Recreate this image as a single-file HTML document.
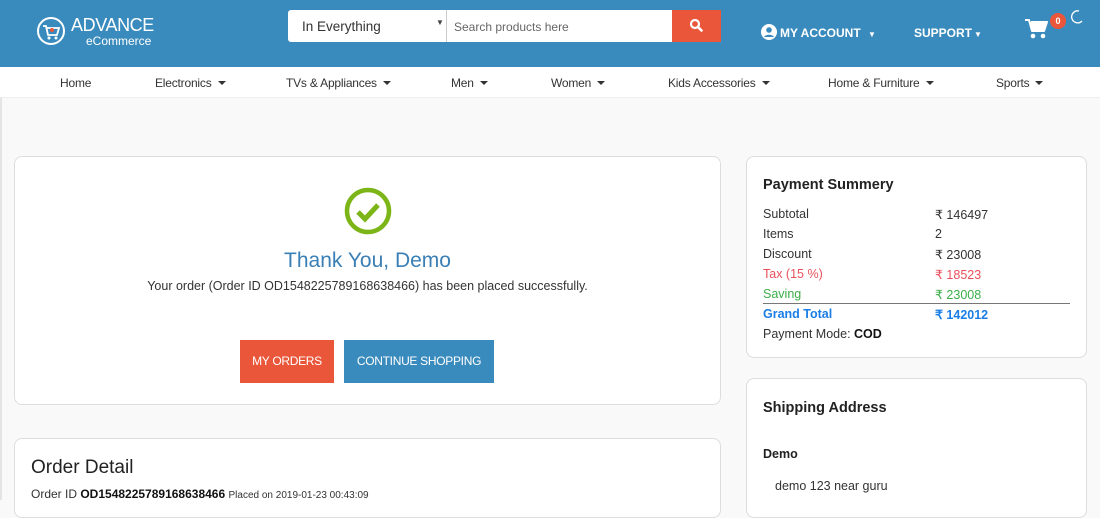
<!DOCTYPE html>
<html><head><meta charset="utf-8"><style>
*{box-sizing:border-box;margin:0;padding:0}
body{width:1100px;height:500px;overflow:hidden;background:#f9f9f9;font-family:"Liberation Sans",sans-serif;position:relative;color:#222}
.a{position:absolute}
.hdr{left:0;top:0;width:1100px;height:67px;background:#3a8bbd}
.nav{left:0;top:67px;width:1100px;height:31px;background:#fff;border-bottom:1px solid #eee}
.nav span{position:absolute;top:9px;font-size:12px;color:#333;letter-spacing:-.2px}
.car{display:inline-block;border-left:4px solid transparent;border-right:4px solid transparent;border-top:4px solid #333;vertical-align:middle;margin-left:6px;margin-top:-2px}
.card{background:#fff;border:1px solid #ddd;border-radius:8px}
.row{position:absolute;left:16px;font-size:12.5px;color:#333}
.v{position:absolute;left:172px;top:0;white-space:nowrap}
</style></head><body>
<div class="a hdr"></div>
<svg class="a" style="left:36px;top:16px" width="30" height="30" viewBox="0 0 30 30"><circle cx="15" cy="15" r="13" fill="none" stroke="#fff" stroke-width="2"/><path d="M7 10h3l2 9h9l2-7H11" fill="none" stroke="#fff" stroke-width="1.8"/><circle cx="13" cy="22" r="1.5" fill="#fff"/><circle cx="20" cy="22" r="1.5" fill="#fff"/><circle cx="16" cy="14" r="2" fill="#e9563a"/></svg>
<div class="a" style="left:71px;top:15px;color:#fff;font-size:18px;letter-spacing:-.4px">ADVANCE</div>
<div class="a" style="left:86px;top:34px;color:#fff;font-size:12px">eCommerce</div>
<div class="a" style="left:288px;top:10px;width:159px;height:32px;background:#fff;border-radius:3px 0 0 3px;border-right:1px solid #ccc"></div>
<div class="a" style="left:302px;top:19px;font-size:13.5px;color:#333">In Everything</div>
<div class="a" style="left:436px;top:18px;font-size:8px;color:#444">▼</div>
<div class="a" style="left:447px;top:10px;width:226px;height:32px;background:#fff"></div>
<div class="a" style="left:454px;top:20px;font-size:12px;color:#666">Search products here</div>
<div class="a" style="left:672px;top:10px;width:49px;height:32px;background:#e9563a"></div>
<svg class="a" style="left:689px;top:18px" width="14" height="14" viewBox="0 0 14 14"><circle cx="6" cy="6" r="4" fill="none" stroke="#fff" stroke-width="2.2"/><path d="M9 9l3.5 3.5" stroke="#fff" stroke-width="2.6" stroke-linecap="round"/></svg>
<svg class="a" style="left:761px;top:24px" width="16" height="16" viewBox="0 0 16 16"><circle cx="8" cy="8" r="8" fill="#fff"/><circle cx="8" cy="6" r="2.8" fill="#3a8bbd"/><path d="M3 13c1.5-3 8.5-3 10 0" fill="#3a8bbd"/></svg>
<div class="a" style="left:780px;top:26px;font-size:12px;font-weight:bold;color:#fff">MY ACCOUNT <span style="font-size:8px;margin-left:4px">▼</span></div>
<div class="a" style="left:914px;top:26px;font-size:12px;font-weight:bold;color:#fff">SUPPORT<span style="font-size:8px;margin-left:2px">▼</span></div>
<svg class="a" style="left:1024px;top:18px" width="24" height="22" viewBox="0 0 24 22"><path d="M1 2h4l3 11h12l3-9H7" fill="#fff" stroke="#fff" stroke-width="2" stroke-linejoin="round"/><circle cx="9" cy="18" r="2.3" fill="#fff"/><circle cx="19" cy="18" r="2.3" fill="#fff"/></svg>
<div class="a" style="left:1050px;top:13px;width:16px;height:16px;border-radius:50%;background:#e9563a;color:#fff;font-size:9px;font-weight:bold;text-align:center;line-height:16px">0</div>
<svg class="a" style="left:1071px;top:10px" width="12" height="14" viewBox="0 0 12 14"><path d="M8 1A6 6 0 1 0 11 11" fill="none" stroke="#fff" stroke-width="1.3"/></svg>
<div class="a nav">
<span style="left:60px">Home</span>
<span style="left:155px">Electronics<i class="car"></i></span>
<span style="left:286px">TVs &amp; Appliances<i class="car"></i></span>
<span style="left:451px">Men<i class="car"></i></span>
<span style="left:551px">Women<i class="car"></i></span>
<span style="left:668px">Kids Accessories<i class="car"></i></span>
<span style="left:828px">Home &amp; Furniture<i class="car"></i></span>
<span style="left:996px">Sports<i class="car"></i></span>
</div>
<div class="a" style="left:0;top:98px;width:2px;height:402px;background:#e4e4e4"></div>

<div class="a card" style="left:14px;top:156px;width:707px;height:249px"></div>
<svg class="a" style="left:343px;top:187px" width="50" height="50" viewBox="0 0 50 50"><circle cx="25" cy="24" r="21" fill="none" stroke="#7cb518" stroke-width="4.5"/><path d="M15 25l7 7 13-14" fill="none" stroke="#7cb518" stroke-width="5"/></svg>
<div class="a" style="left:14px;top:249px;width:707px;text-align:center;font-size:21px;color:#3a7fb5">Thank You, Demo</div>
<div class="a" style="left:14px;top:279px;width:707px;text-align:center;font-size:12.5px;color:#333">Your order (Order ID OD1548225789168638466) has been placed successfully.</div>
<div class="a" style="left:240px;top:340px;width:94px;height:43px;background:#e9563a;color:#fff;font-size:12px;text-align:center;line-height:43px;letter-spacing:-.3px">MY ORDERS</div>
<div class="a" style="left:344px;top:340px;width:150px;height:43px;background:#3a8bbd;color:#fff;font-size:12px;text-align:center;line-height:43px;letter-spacing:-.3px">CONTINUE SHOPPING</div>

<div class="a card" style="left:14px;top:438px;width:707px;height:80px"></div>
<div class="a" style="left:31px;top:457px;font-size:19px;color:#222">Order Detail</div>
<div class="a" style="left:31px;top:487px;font-size:12px;color:#333">Order ID <b style="color:#111">OD1548225789168638466</b> <span style="font-size:10px">Placed on 2019-01-23 00:43:09</span></div>

<div class="a card" style="left:746px;top:156px;width:341px;height:202px">
<div class="a" style="left:16px;top:20px;font-size:14.5px;font-weight:bold;color:#222">Payment Summery</div>
<div class="row" style="top:50px">Subtotal<span class="v">₹ 146497</span></div>
<div class="row" style="top:70px">Items<span class="v">2</span></div>
<div class="row" style="top:90px">Discount<span class="v">₹ 23008</span></div>
<div class="row" style="top:110px;color:#e8505b">Tax (15 %)<span class="v">₹ 18523</span></div>
<div class="row" style="top:130px;color:#3cae4a">Saving<span class="v">₹ 23008</span></div>
<div class="a" style="left:16px;top:146px;width:307px;height:1px;background:#777"></div>
<div class="row" style="top:150px;color:#1a7ee6;font-weight:bold">Grand Total<span class="v">₹ 142012</span></div>
<div class="row" style="top:170px">Payment Mode: <b style="color:#111">COD</b></div>
</div>

<div class="a card" style="left:746px;top:378px;width:341px;height:140px">
<div class="a" style="left:16px;top:21px;font-size:14.5px;font-weight:bold;color:#222">Shipping Address</div>
<div class="a" style="left:16px;top:68px;font-size:12.5px;font-weight:bold;color:#222">Demo</div>
<div class="a" style="left:28px;top:100px;font-size:12.5px;color:#333">demo 123 near guru</div>
</div>
</body></html>
